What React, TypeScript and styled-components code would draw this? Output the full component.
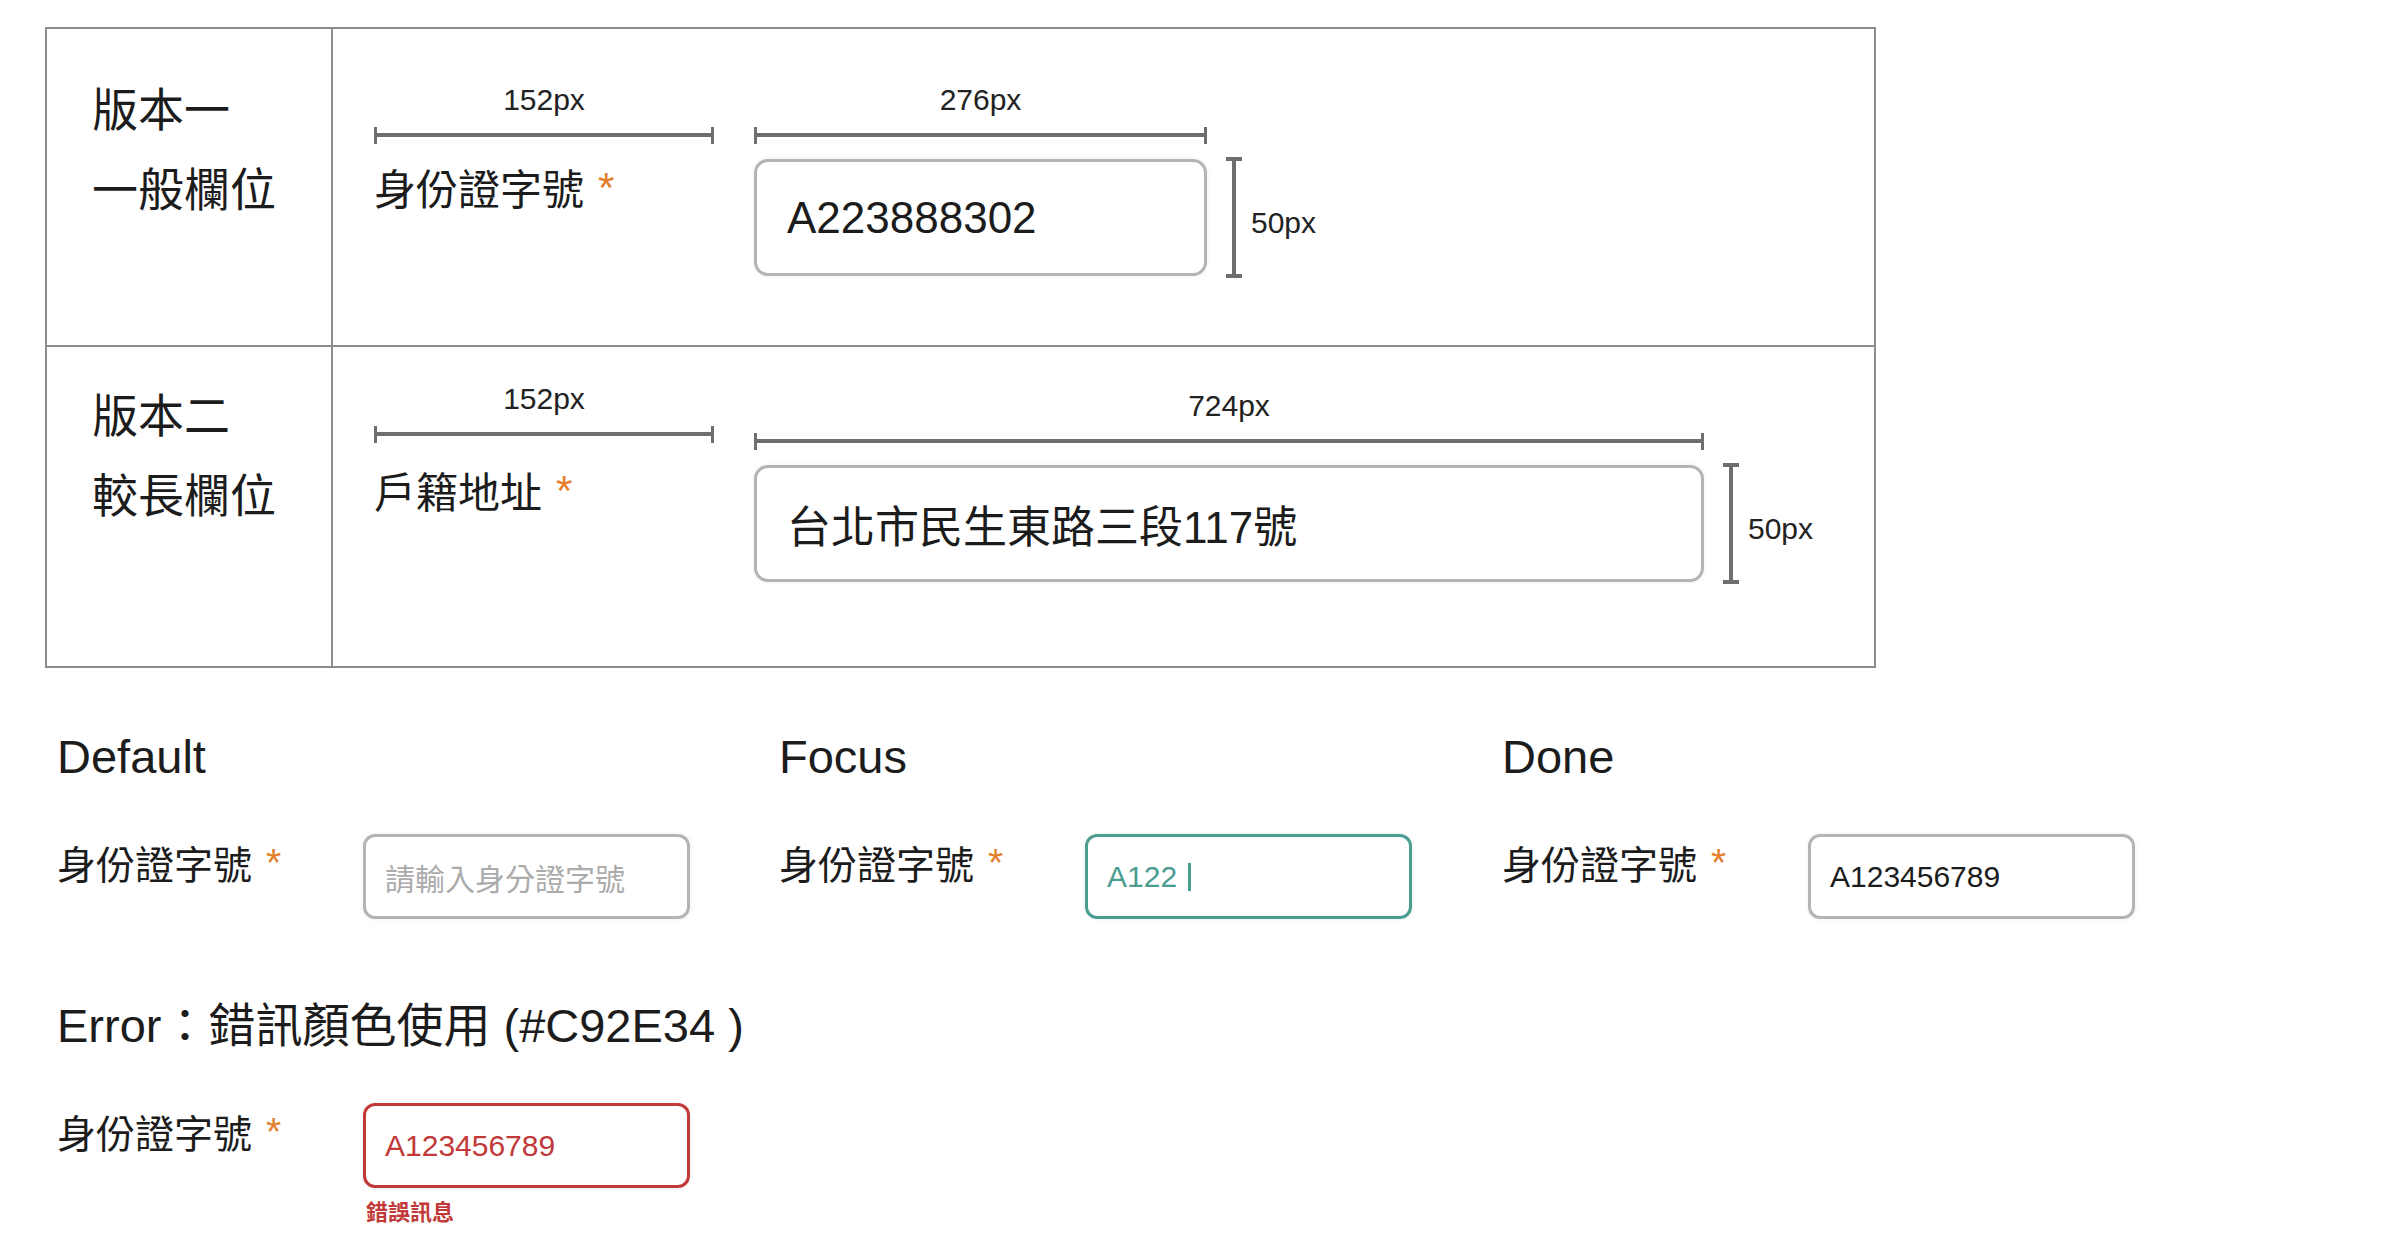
import React from "react";
import styled, { createGlobalStyle } from "styled-components";

const GlobalStyle = createGlobalStyle`
  html, body { margin: 0; padding: 0; background: #ffffff; }
  body {
    font-family: "Liberation Sans", "Noto Sans CJK TC", sans-serif;
    color: #1c1c1c;
  }
  * { box-sizing: border-box; }
`;

const FONT = `"Liberation Sans", "Noto Sans CJK TC", sans-serif`;
const DIM = "#6e6e6e";
const TEAL = "#4b9d91";
const RED = "#c2393a";
const ORANGE = "#e47f2d";

const Page = styled.div`
  width: 2408px;
  min-height: 1256px;
  padding: 27px 0 0 45px;
`;

const Table = styled.div`
  width: 1831px;
  border: 2px solid #8c8c8c;
  display: flex;
  flex-direction: column;
`;

const Row = styled.div<{ $h: number; $divider?: boolean }>`
  display: grid;
  grid-template-columns: 286px 1fr;
  height: ${(p) => p.$h}px;
  border-top: ${(p) => (p.$divider ? "2px solid #8c8c8c" : "none")};
`;

const VersionCell = styled.div<{ $pt: number }>`
  border-right: 2px solid #8c8c8c;
  padding: ${(p) => p.$pt}px 0 0 45px;
  font-family: ${FONT};
  font-size: 46px;
  line-height: 80px;
  color: #1c1c1c;
`;

const SpecCell = styled.div`
  display: flex;
  align-items: flex-start;
  gap: 40px;
  padding-left: 41px;
`;

const Column = styled.div<{ $pt: number }>`
  display: flex;
  flex-direction: column;
  align-items: flex-start;
  padding-top: ${(p) => p.$pt}px;
`;

const DimText = styled.div<{ $w: number }>`
  width: ${(p) => p.$w}px;
  text-align: center;
  font-family: ${FONT};
  font-size: 30px;
  line-height: 36px;
  color: #222;
`;

const HDim = styled.div<{ $w: number }>`
  width: ${(p) => p.$w}px;
  height: 18px;
  margin-top: 8px;
  display: flex;
  align-items: center;
`;

const Tick = styled.div`
  width: 3px;
  height: 17px;
  background: ${DIM};
`;

const HBar = styled.div`
  flex: 1;
  height: 4px;
  background: ${DIM};
`;

const FieldLabel = styled.div<{ $mt: number; $size: number }>`
  margin-top: ${(p) => p.$mt}px;
  font-family: ${FONT};
  font-size: ${(p) => p.$size}px;
  line-height: ${(p) => Math.round(p.$size * 1.2)}px;
  color: #1c1c1c;
  white-space: nowrap;
`;

const Star = styled.span`
  color: ${ORANGE};
  font-family: "Liberation Sans", sans-serif;
  margin-left: 14px;
  vertical-align: top;
  position: relative;
  top: -3px;
`;

const InputRow = styled.div`
  display: flex;
  align-items: flex-start;
  margin-top: 15px;
`;

const BigInput = styled.div<{ $w: number }>`
  width: ${(p) => p.$w}px;
  height: 117px;
  border: 3px solid #b4b4b4;
  border-radius: 14px;
  box-shadow: 0 0 5px rgba(0, 0, 0, 0.07);
  display: flex;
  align-items: center;
  padding-left: 30px;
  font-family: ${FONT};
  font-size: 44px;
  color: #1c1c1c;
`;

const VDimWrap = styled.div`
  display: flex;
  align-items: center;
  margin-left: 19px;
  margin-top: -2px;
  height: 121px;
`;

const VDim = styled.div`
  width: 16px;
  height: 100%;
  display: flex;
  flex-direction: column;
  align-items: center;
`;

const Cap = styled.div`
  width: 16px;
  height: 4px;
  background: ${DIM};
`;

const VBar = styled.div`
  flex: 1;
  width: 4px;
  background: ${DIM};
`;

const VDimText = styled.div`
  margin-left: 9px;
  padding-top: 10px;
  font-family: ${FONT};
  font-size: 30px;
  color: #222;
`;

const Section = styled.div`
  margin-left: 12px;
`;

const StatesGrid = styled.div`
  display: grid;
  grid-template-columns: 722px 723px 1fr;
  margin-top: 61px;
`;

const StateBlock = styled.div`
  display: flex;
  flex-direction: column;
`;

const Title = styled.div`
  font-family: ${FONT};
  font-size: 47px;
  line-height: 56px;
  color: #1c1c1c;
  white-space: nowrap;
`;

const ErrorBlock = styled(StateBlock)`
  margin-top: 79px;
`;

const FieldRow = styled.div`
  display: flex;
  align-items: flex-start;
  margin-top: 49px;
`;

const SmallLabel = styled.div`
  width: 306px;
  margin-top: 9px;
  font-family: ${FONT};
  font-size: 39px;
  line-height: 46px;
  color: #1c1c1c;
  white-space: nowrap;
`;

type Variant = "default" | "focus" | "done" | "error";

const borderFor = (v: Variant) =>
  v === "focus" ? TEAL : v === "error" ? RED : "#b4b4b4";
const colorFor = (v: Variant) =>
  v === "focus" ? TEAL : v === "error" ? RED : v === "default" ? "#ababab" : "#1c1c1c";

const SmallInput = styled.div<{ $v: Variant }>`
  width: 327px;
  height: 85px;
  border: 3px solid ${(p) => borderFor(p.$v)};
  border-radius: 12px;
  box-shadow: 0 0 5px rgba(0, 0, 0, 0.07);
  display: flex;
  align-items: center;
  padding-left: 19px;
  font-family: ${FONT};
  font-size: 30px;
  color: ${(p) => colorFor(p.$v)};
`;

const Caret = styled.span`
  display: inline-block;
  width: 3px;
  height: 28px;
  margin-left: 11px;
  background: ${TEAL};
`;

const InputStack = styled.div`
  display: flex;
  flex-direction: column;
`;

const ErrorMsg = styled.div`
  margin: 12px 0 0 3px;
  font-family: ${FONT};
  font-size: 22px;
  line-height: 26px;
  font-weight: 700;
  color: ${RED};
`;

const HDimension = ({ w, label }: { w: number; label: string }) => (
  <>
    <DimText $w={w}>{label}</DimText>
    <HDim $w={w}>
      <Tick />
      <HBar />
      <Tick />
    </HDim>
  </>
);

const VDimension = () => (
  <VDimWrap>
    <VDim>
      <Cap />
      <VBar />
      <Cap />
    </VDim>
    <VDimText>50px</VDimText>
  </VDimWrap>
);

const SpecRow = ({
  h,
  divider,
  versionPt,
  lines,
  labelPt,
  inputPt,
  labelMt,
  label,
  inputW,
  inputLabel,
  value,
}: {
  h: number;
  divider?: boolean;
  versionPt: number;
  lines: string[];
  labelPt: number;
  inputPt: number;
  labelMt: number;
  label: string;
  inputW: number;
  inputLabel: string;
  value: string;
}) => (
  <Row $h={h} $divider={divider}>
    <VersionCell $pt={versionPt}>
      {lines.map((l) => (
        <div key={l}>{l}</div>
      ))}
    </VersionCell>
    <SpecCell>
      <Column $pt={labelPt}>
        <HDimension w={340} label="152px" />
        <FieldLabel $mt={labelMt} $size={42}>
          {label}
          <Star>*</Star>
        </FieldLabel>
      </Column>
      <Column $pt={inputPt}>
        <HDimension w={inputW} label={inputLabel} />
        <InputRow>
          <BigInput $w={inputW}>{value}</BigInput>
          <VDimension />
        </InputRow>
      </Column>
    </SpecCell>
  </Row>
);

const StateField = ({
  title,
  variant,
  children,
}: {
  title: string;
  variant: Variant;
  children: React.ReactNode;
}) => (
  <StateBlock>
    <Title>{title}</Title>
    <FieldRow>
      <SmallLabel>
        身份證字號<Star>*</Star>
      </SmallLabel>
      <SmallInput $v={variant}>{children}</SmallInput>
    </FieldRow>
  </StateBlock>
);

export default function App() {
  return (
    <Page>
      <GlobalStyle />
      <Table>
        <SpecRow
          h={316}
          versionPt={41}
          lines={["版本一", "一般欄位"]}
          labelPt={53}
          inputPt={53}
          labelMt={22}
          label="身份證字號"
          inputW={453}
          inputLabel="276px"
          value="A223888302"
        />
        <SpecRow
          h={321}
          divider
          versionPt={29}
          lines={["版本二", "較長欄位"]}
          labelPt={34}
          inputPt={41}
          labelMt={26}
          label="戶籍地址"
          inputW={950}
          inputLabel="724px"
          value="台北市民生東路三段117號"
        />
      </Table>
      <Section>
        <StatesGrid>
          <StateField title="Default" variant="default">
            請輸入身分證字號
          </StateField>
          <StateField title="Focus" variant="focus">
            A122
            <Caret />
          </StateField>
          <StateField title="Done" variant="done">
            A123456789
          </StateField>
        </StatesGrid>
        <ErrorBlock>
          <Title>Error：錯訊顏色使用 (#C92E34 )</Title>
          <FieldRow>
            <SmallLabel>
              身份證字號<Star>*</Star>
            </SmallLabel>
            <InputStack>
              <SmallInput $v="error">A123456789</SmallInput>
              <ErrorMsg>錯誤訊息</ErrorMsg>
            </InputStack>
          </FieldRow>
        </ErrorBlock>
      </Section>
    </Page>
  );
}
